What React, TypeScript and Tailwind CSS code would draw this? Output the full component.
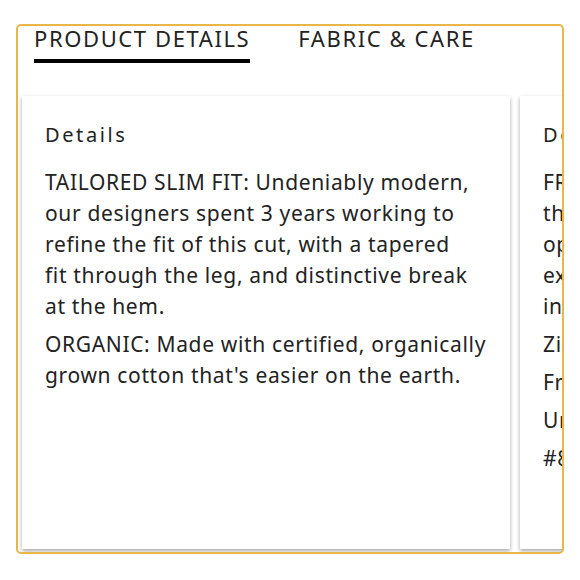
import React from 'react';

const cards = [
  {
    title: 'Details',
    paras: [
      [
        'TAILORED SLIM FIT: Undeniably modern,',
        'our designers spent 3 years working to',
        'refine the fit of this cut, with a tapered',
        'fit through the leg, and distinctive break',
        'at the hem.',
      ],
      ['ORGANIC: Made with certified, organically', "grown cotton that's easier on the earth."],
    ],
  },
  {
    title: 'Details',
    paras: [
      [
        'FRONT POCKETS: Classic five-pocket',
        'then refined with a clean finish and an',
        'open, easy feel. Designed for every day,',
        'extra durable and soft, with a hidden',
        'inner coin pocket.',
      ],
      ['Zip fly with button closure.'],
      ['Front and back pockets.'],
      ['Unisex fit.'],
      ['#811204'],
    ],
  },
];

const App: React.FC = () => {
  return (
    <div className="w-[580px] h-[580px] bg-white pt-6 px-4 font-['Noto_Sans',sans-serif] text-[#222]">
      <div className="h-[530px] border-2 border-[#ebb648] rounded-[5px] overflow-hidden flex flex-col">
        <div className="flex gap-12 pl-4">
          <div className="pb-[9px] border-b-4 border-black text-[22px] leading-[24px] tracking-[1.6px]">PRODUCT DETAILS</div>
          <div className="text-[22px] leading-[24px] tracking-[1.6px]">FABRIC &amp; CARE</div>
        </div>
        <div className="flex gap-[10px] pl-[4px] pt-[33px] pb-[3px] flex-1 min-h-0">
          {cards.map((card, i) => (
            <div
              key={i}
              className="w-[488px] shrink-0 bg-white px-[23px] pt-[24px] shadow-[0_2px_4px_rgba(0,0,0,0.35)]"
            >
              <div className="text-[20px] leading-[30px] tracking-[2.6px] mb-[17px]">{card.title}</div>
              {card.paras.map((lines, j) => (
                <p key={j} className="text-[21px] leading-[31px] tracking-[0.65px] mb-[7px] whitespace-nowrap">
                  {lines.map((line, k) => (
                    <React.Fragment key={k}>
                      {k > 0 && <br />}
                      {line}
                    </React.Fragment>
                  ))}
                </p>
              ))}
            </div>
          ))}
        </div>
      </div>
    </div>
  );
};

export default App;
